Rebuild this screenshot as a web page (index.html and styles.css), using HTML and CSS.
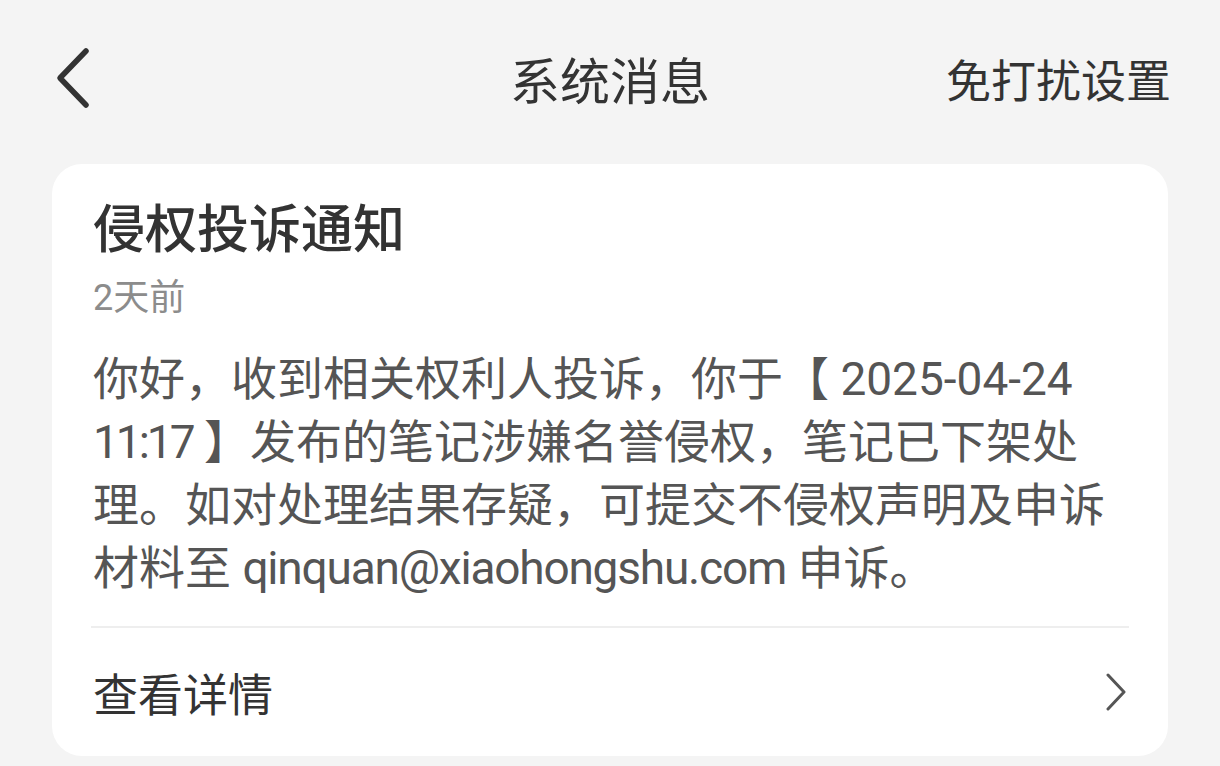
FILE: index.html
```html
<!DOCTYPE html>
<html lang="zh-CN">
<head>
    <meta charset="UTF-8">
    <meta name="viewport" content="width=device-width, initial-scale=1.0">
    <link rel="stylesheet" href="styles.css">
</head>
<body>

    <div class="top-bar">
        <div class="back">
            <svg width="34" height="62" viewBox="0 0 34 62">
                <polyline points="30,4 4,31 30,58" fill="none" stroke="#333" stroke-width="5.5" stroke-linecap="round" stroke-linejoin="round"/>
            </svg>
        </div>
        <div class="page-title">系统消息</div>
        <div class="top-action">免打扰设置</div>
    </div>

    <div class="card">
        <div class="card-title">侵权投诉通知</div>
        <div class="card-time">2天前</div>
        <div class="card-text">
            你好，收到相关权利人投诉，你于【 2025-04-24<br>
            <span class="time">11:17</span> 】发布的笔记涉嫌名誉侵权，笔记已下架处<br>
            理。如对处理结果存疑，可提交不侵权声明及申诉<br>
            材料至 <span class="mail">qinquan@xiaohongshu.com</span> 申诉。
        </div>
        <div class="divider"></div>
        <div class="detail-row">
            <span>查看详情</span>
            <svg width="22" height="38" viewBox="0 0 22 38">
                <polyline points="3,2 19,19 3,36" fill="none" stroke="#555" stroke-width="3" stroke-linecap="round" stroke-linejoin="round"/>
            </svg>
        </div>
    </div>

</body>
</html>
```

FILE: styles.css
```css
body {
    margin: 0;
    padding: 0 52px;
    background-color: #f4f4f4;
    font-family: Roboto, "Noto Sans CJK SC", sans-serif;
    color: #333;
}

.top-bar {
    height: 156px;
    display: flex;
    align-items: center;
    justify-content: space-between;
    position: relative;
    margin: 0 -52px;
    padding: 0 49px 0 56px;
}

.back {
    width: 60px;
    display: flex;
    align-items: center;
}

.page-title {
    font-size: 50px;
    position: absolute;
    left: 0;
    right: 0;
    text-align: center;
    color: #333;
}

.top-action {
    font-size: 45px;
    color: #333;
}

.card {
    margin-top: 8px;
    background-color: #fff;
    border-radius: 30px;
    padding: 35px 39px 0 41px;
}

.card-title {
    font-size: 52px;
    line-height: 64px;
    font-weight: 500;
    color: #333;
}

.card-time {
    margin-top: 13px;
    font-size: 36px;
    line-height: 44px;
    color: #8c8c8c;
}

.card-text {
    margin-top: 28px;
    font-size: 46px;
    line-height: 63px;
    color: #555;
    white-space: nowrap;
}

/* latin bits run a little narrower in the app font */
.card-text .time {
    letter-spacing: -3px;
}

.card-text .mail {
    letter-spacing: -1.2px;
}

.divider {
    margin-top: 26px;
    margin-left: -2px;
    height: 2px;
    background-color: #eeeeee;
}

.detail-row {
    height: 128px;
    display: flex;
    align-items: center;
    justify-content: space-between;
    font-size: 45px;
    color: #333;
}

.detail-row svg {
    margin-right: 2px;
}
```
